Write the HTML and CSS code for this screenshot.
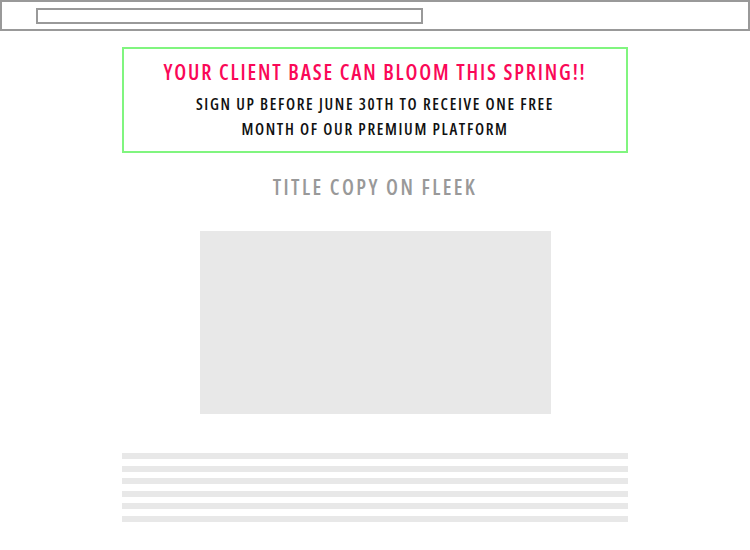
FILE: index.html
```html
<!DOCTYPE html>
<html>
<head>
  <title>Spring Promo</title>
  <link rel="stylesheet" href="styles.css">
</head>
<body>

  <div class="topbar">
    <div class="urlbox"></div>
  </div>

  <div class="promo">
    <h1 class="promo-title">YOUR CLIENT BASE CAN BLOOM THIS SPRING!!</h1>
    <p class="promo-text">SIGN UP BEFORE JUNE 30TH TO RECEIVE ONE FREE<br>MONTH OF OUR PREMIUM PLATFORM</p>
  </div>

  <h2 class="section-title">TITLE COPY ON FLEEK</h2>

  <div class="hero-image"></div>

  <div class="copy-lines">
    <div class="line"></div>
    <div class="line"></div>
    <div class="line"></div>
    <div class="line"></div>
    <div class="line"></div>
    <div class="line"></div>
  </div>

</body>
</html>
```

FILE: styles.css
```css
body {
  font-family: "Open Sans", "DejaVu Sans Condensed", sans-serif;
  font-stretch: condensed;
  background-color: #fff;
  margin: 0;
}
.topbar {
  height: 21px;
  border: 2px solid #999;
  padding: 6px 0 0 34px;
}
.urlbox {
  width: 383px;
  height: 12px;
  border: 2px solid #999;
}
.promo {
  width: 502px;
  height: 102px;
  margin: 16px auto 0;
  border: 2px solid #80f57f;
  text-align: center;
}
.promo-title {
  margin: 8px 0 0;
  font-size: 21px;
  line-height: 30px;
  font-weight: 600;
  letter-spacing: 1.85px;
  color: #fa0857;
}
.promo-text {
  margin: 5px 0 0;
  font-size: 16px;
  line-height: 25px;
  font-weight: 600;
  letter-spacing: 1.65px;
  color: #111;
}
.section-title {
  margin: 19px 0 0;
  text-align: center;
  font-size: 21px;
  line-height: 30px;
  font-weight: 600;
  letter-spacing: 2.4px;
  color: #999;
}
.hero-image {
  width: 351px;
  height: 183px;
  margin: 29px auto 0;
  background-color: #e8e8e8;
}
.copy-lines {
  width: 506px;
  margin: 39px auto 0;
  display: flex;
  flex-direction: column;
  gap: 6.6px;
}
.line {
  height: 6px;
  background-color: #e8e8e8;
}
```
